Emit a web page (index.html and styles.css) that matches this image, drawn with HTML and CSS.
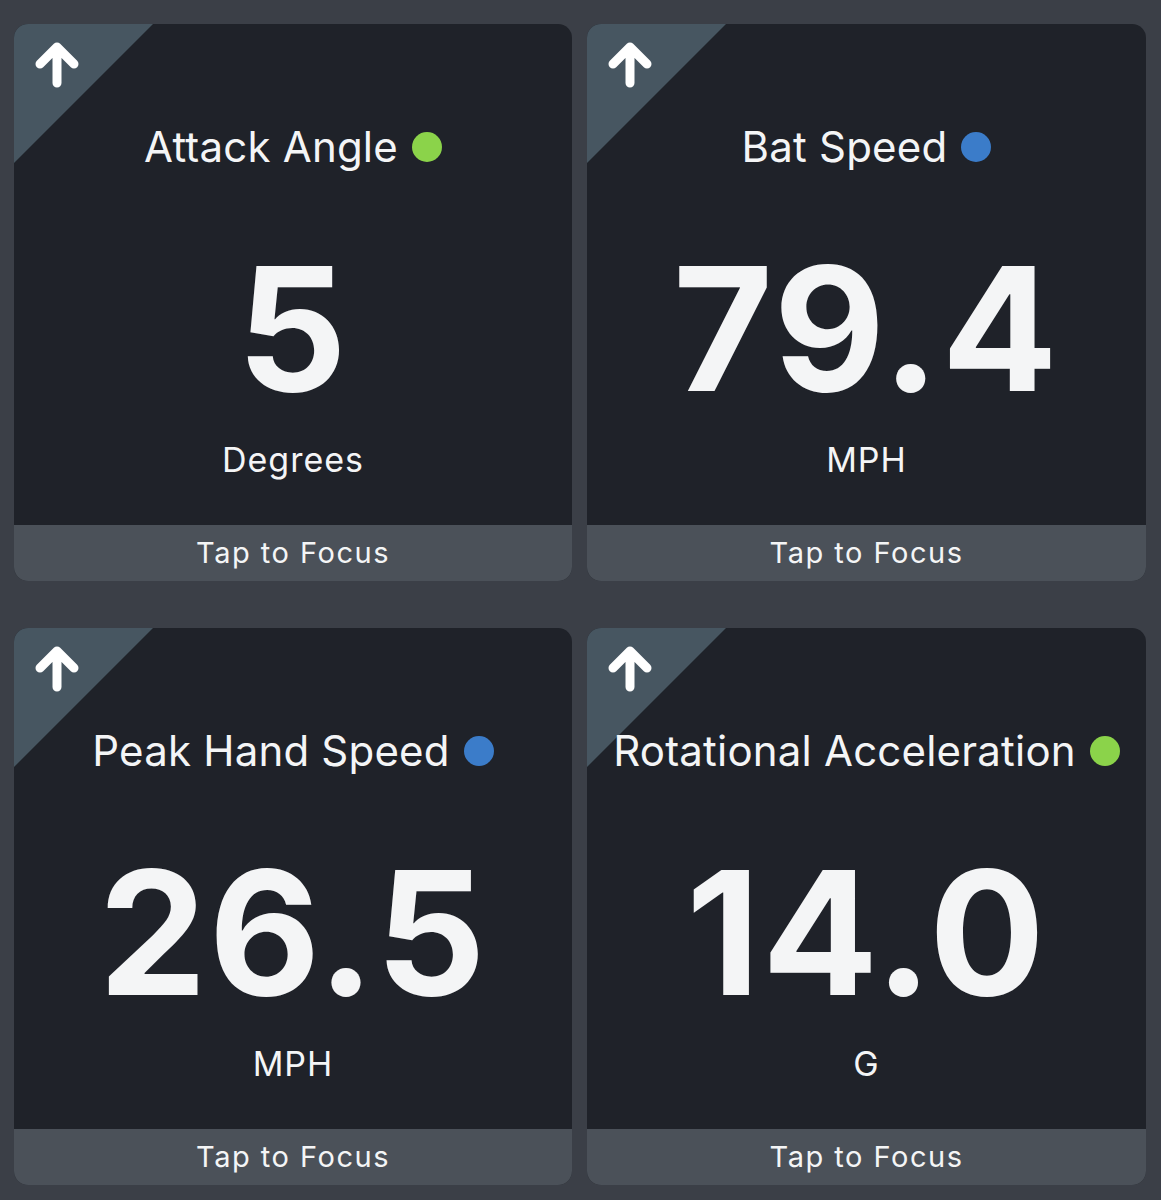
FILE: index.html
```html
<!DOCTYPE html>
<html>
<head>
<meta charset="utf-8">
<link rel="stylesheet" href="styles.css">
</head>
<body>
<div class="grid">
  <div class="card">
    <div class="corner"></div>
    <svg class="arrow" viewBox="0 0 80 80"><path d="M43 59 V25 M26 40 L43 23 L60 40" /></svg>
    <div class="body">
      <div class="title">Attack Angle <span class="dot green"></span></div>
      <div class="value">5</div>
      <div class="unit">Degrees</div>
    </div>
    <div class="footer">Tap to Focus</div>
  </div>
  <div class="card">
    <div class="corner"></div>
    <svg class="arrow" viewBox="0 0 80 80"><path d="M43 59 V25 M26 40 L43 23 L60 40" /></svg>
    <div class="body">
      <div class="title">Bat Speed <span class="dot blue"></span></div>
      <div class="value">79.4</div>
      <div class="unit">MPH</div>
    </div>
    <div class="footer">Tap to Focus</div>
  </div>
  <div class="card">
    <div class="corner"></div>
    <svg class="arrow" viewBox="0 0 80 80"><path d="M43 59 V25 M26 40 L43 23 L60 40" /></svg>
    <div class="body">
      <div class="title">Peak Hand Speed <span class="dot blue"></span></div>
      <div class="value">26.5</div>
      <div class="unit">MPH</div>
    </div>
    <div class="footer">Tap to Focus</div>
  </div>
  <div class="card">
    <div class="corner"></div>
    <svg class="arrow" viewBox="0 0 80 80"><path d="M43 59 V25 M26 40 L43 23 L60 40" /></svg>
    <div class="body">
      <div class="title">Rotational Acceleration <span class="dot green"></span></div>
      <div class="value">14.0</div>
      <div class="unit">G</div>
    </div>
    <div class="footer">Tap to Focus</div>
  </div>
</div>
</body>
</html>
```
FILE: styles.css
```css
html, body {
  margin: 0;
  padding: 0;
  background: #3b3f47;
}
body {
  font-family: Inter, "Open Sans", "Liberation Sans", sans-serif;
  color: #f4f5f6;
}
.grid {
  display: grid;
  grid-template-columns: 558px 559px;
  column-gap: 15px;
  row-gap: 47px;
  padding: 24px 15px 15px 14px;
}
.card {
  position: relative;
  height: 557px;
  background: #1f2229;
  border-radius: 14px;
  overflow: hidden;
  display: flex;
  flex-direction: column;
}
.corner {
  position: absolute;
  left: 0;
  top: 0;
  width: 139px;
  height: 139px;
  background: #475661;
  clip-path: polygon(0 0, 100% 0, 0 100%);
}
.arrow {
  position: absolute;
  left: 0;
  top: 0;
  width: 80px;
  height: 80px;
}
.arrow path {
  fill: none;
  stroke: #ffffff;
  stroke-width: 9;
  stroke-linecap: round;
  stroke-linejoin: round;
}
.body {
  flex: 1;
  display: flex;
  flex-direction: column;
  align-items: center;
  position: relative;
}
.title {
  margin-top: 98px;
  font-size: 42px;
  line-height: 50px;
  font-weight: 400;
  letter-spacing: 0.2px;
  display: flex;
  align-items: center;
  white-space: nowrap;
}
.dot {
  display: inline-block;
  width: 30px;
  height: 30px;
  border-radius: 50%;
  margin-left: 14px;
}
.green { background: #8bd34a; }
.blue { background: #3b7cc9; }
.value {
  margin-top: 66px;
  font-size: 172px;
  line-height: 180px;
  font-weight: 700;
  letter-spacing: 2px;
}
.unit {
  margin-top: 22px;
  font-size: 34px;
  line-height: 40px;
  letter-spacing: 1px;
}
.footer {
  height: 56px;
  background: #4b5159;
  text-align: center;
  font-size: 29px;
  line-height: 56px;
  letter-spacing: 1.5px;
}
```
